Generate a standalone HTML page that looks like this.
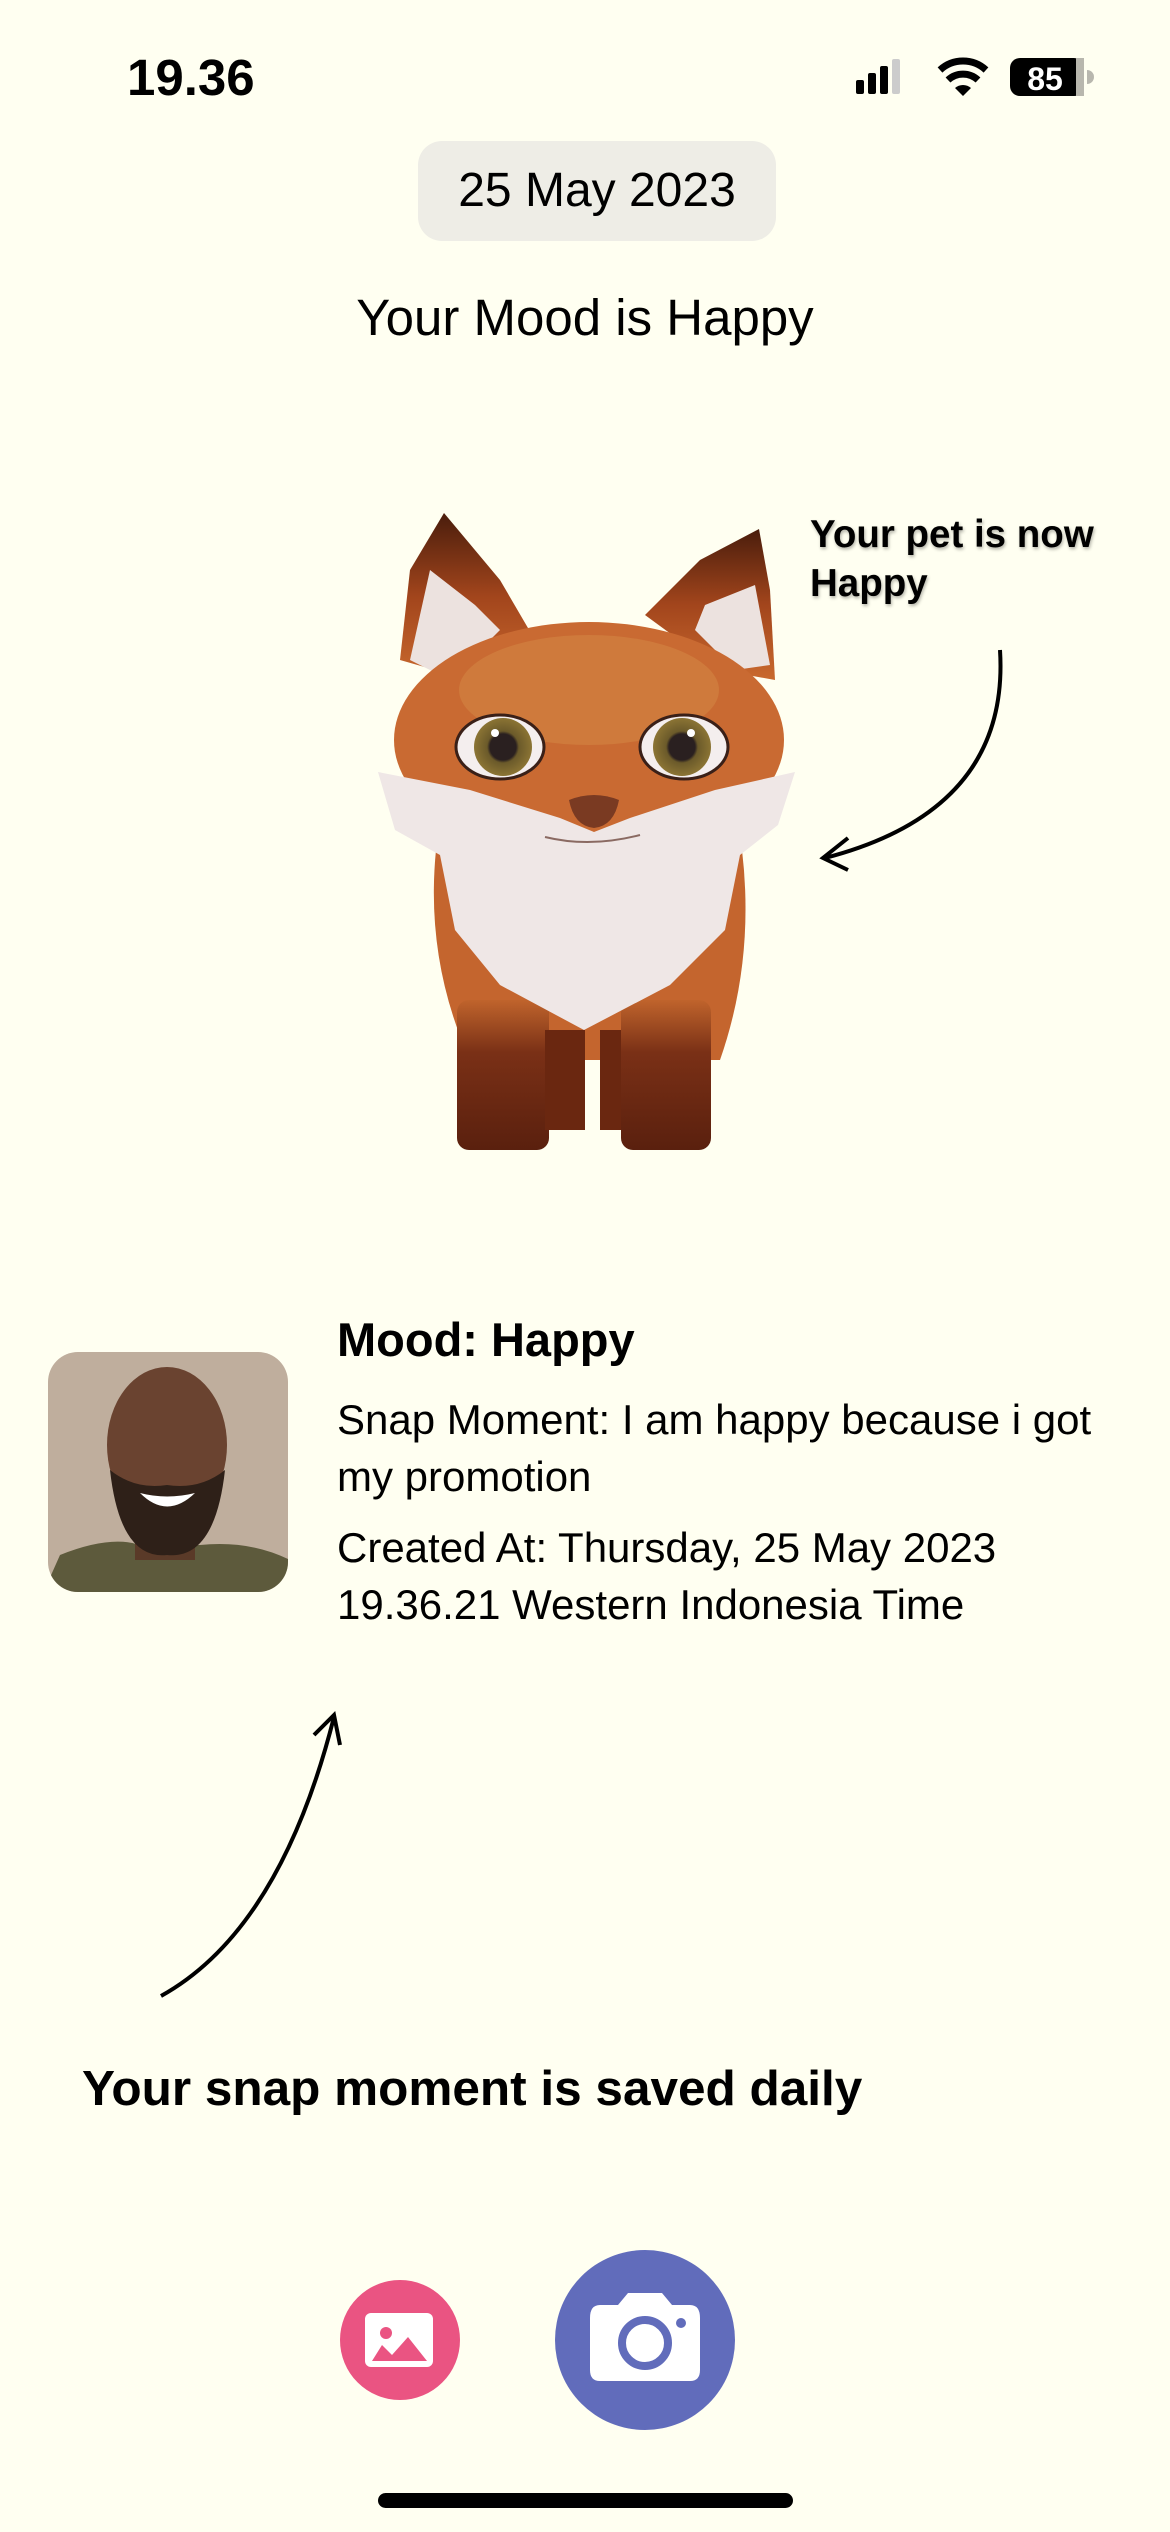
<!DOCTYPE html>
<html><head><meta charset="utf-8">
<style>
html,body{margin:0;padding:0}
body{width:1170px;height:2532px;background:#fffff1;position:relative;overflow:hidden;font-family:"Liberation Sans",sans-serif;color:#000}
.a{position:absolute;white-space:nowrap}
</style></head><body>
<div class="a" style="left:127px;top:48px;font-size:51px;font-weight:bold">19.36</div>
<div class="a" style="left:418px;top:141px;width:358px;height:100px;background:#eeede6;border-radius:24px"></div>
<div class="a" style="left:418px;top:163px;width:358px;text-align:center;font-size:48px">25 May 2023</div>
<div class="a" style="left:0;top:288px;width:1170px;text-align:center;font-size:51px">Your Mood is Happy</div>
<div class="a" style="left:810px;top:510px;font-size:38.5px;font-weight:bold;line-height:49px;text-shadow:1px 2px 3px rgba(0,0,0,.3)">Your pet is now<br>Happy</div>
<div class="a" style="left:337px;top:1312px;font-size:47px;font-weight:bold">Mood: Happy</div>
<div class="a" style="left:337px;top:1391px;font-size:42px;line-height:57px">Snap Moment: I am happy because i got<br>my promotion</div>
<div class="a" style="left:337px;top:1519px;font-size:42px;line-height:57px">Created At: Thursday, 25 May 2023<br>19.36.21 Western Indonesia Time</div>
<div class="a" style="left:82px;top:2060px;font-size:49.5px;font-weight:bold">Your snap moment is saved daily</div>

<svg class="a" style="left:0;top:0" width="1170" height="2532" viewBox="0 0 1170 2532">
<defs>
<linearGradient id="ear" x1="0" y1="0" x2="0" y2="1"><stop offset="0" stop-color="#4a1d0c"/><stop offset=".5" stop-color="#a2451c"/><stop offset="1" stop-color="#c9692e"/></linearGradient>
<linearGradient id="leg" x1="0" y1="0" x2="0" y2="1"><stop offset="0" stop-color="#c0642c"/><stop offset=".35" stop-color="#7a3016"/><stop offset="1" stop-color="#5a200e"/></linearGradient>
<radialGradient id="iris"><stop offset=".45" stop-color="#2a2020"/><stop offset=".55" stop-color="#6b5a2a"/><stop offset="1" stop-color="#8b7434"/></radialGradient>
<clipPath id="av"><rect x="48" y="1352" width="240" height="240" rx="30"/></clipPath>
</defs>
<!-- status icons -->
<rect x="856" y="80" width="8" height="14" rx="2"/><rect x="868" y="73" width="8" height="21" rx="2"/><rect x="880" y="66" width="8" height="28" rx="2"/><rect x="892" y="59" width="8" height="35" rx="2" fill="#ccc"/>
<path d="M940 70 a34 34 0 0 1 46 0" stroke="#000" stroke-width="7" fill="none"/><path d="M948 80 a22 22 0 0 1 30 0" stroke="#000" stroke-width="7" fill="none"/><path d="M955 88 L963 96 L971 88 a12 12 0 0 0 -16 0z"/>
<rect x="1010" y="58" width="74" height="38" rx="10"/><rect x="1076" y="58" width="8" height="38" fill="#b8b7ae"/><path d="M1087 70 a7 7 0 0 1 0 14z" fill="#b8b7ae"/>
<text x="1045" y="90" font-family="Liberation Sans" font-weight="bold" font-size="32" fill="#fff" text-anchor="middle">85</text>
<!-- fox -->
<path d="M444 513 L410 570 L400 660 L470 680 L535 640 L500 580z" fill="url(#ear)"/>
<path d="M430 570 L410 660 L450 680 L500 630 L475 605z" fill="#ece2df"/>
<path d="M759 529 L700 560 L645 615 L720 670 L775 680 L770 590z" fill="url(#ear)"/>
<path d="M755 585 L705 605 L695 630 L735 670 L770 665z" fill="#ece2df"/>
<path d="M436 850 Q425 960 470 1060 L720 1060 Q755 960 742 850z" fill="#c4652e"/>
<rect x="457" y="1000" width="92" height="150" rx="12" fill="url(#leg)"/>
<rect x="545" y="1030" width="40" height="100" fill="#6a2710"/>
<rect x="600" y="1030" width="40" height="100" fill="#6a2710"/>
<rect x="621" y="1000" width="90" height="150" rx="12" fill="url(#leg)"/>
<ellipse cx="589" cy="740" rx="195" ry="118" fill="#c96a32"/>
<ellipse cx="589" cy="690" rx="130" ry="55" fill="#cf7a3c"/>
<path d="M378 772 L470 790 L560 818 L594 832 L630 818 L715 790 L795 772 L778 825 L740 855 L725 930 L670 985 L584 1030 L500 985 L455 930 L440 855 L395 830z" fill="#efe7e6"/>
<path d="M545 837 Q590 848 640 835" stroke="#8a6a62" stroke-width="2" fill="none"/>
<ellipse cx="500" cy="747" rx="44" ry="32" fill="#f4eeee" stroke="#3a2018" stroke-width="3"/>
<circle cx="503" cy="747" r="29" fill="url(#iris)"/><circle cx="495" cy="733" r="4" fill="#fff"/>
<ellipse cx="684" cy="747" rx="44" ry="32" fill="#f4eeee" stroke="#3a2018" stroke-width="3"/>
<circle cx="682" cy="747" r="29" fill="url(#iris)"/><circle cx="691" cy="733" r="4" fill="#fff"/>
<path d="M569 800 Q594 790 619 800 Q614 826 594 828 Q574 826 569 800z" fill="#7a3a22"/>
<!-- arrows -->
<path d="M1000 650 Q1010 810 825 858" stroke="#000" stroke-width="4" fill="none"/>
<path d="M848 838 L823 858 L848 870" stroke="#000" stroke-width="4" fill="none"/>
<path d="M161 1996 Q280 1930 334 1717" stroke="#000" stroke-width="4" fill="none"/>
<path d="M314 1735 L334 1715 L340 1745" stroke="#000" stroke-width="4" fill="none"/>
<!-- avatar -->
<g clip-path="url(#av)">
<rect x="48" y="1352" width="240" height="240" fill="#bfae9d"/>
<path d="M40 1600 L60 1555 Q110 1535 140 1545 L200 1545 Q250 1540 290 1560 L300 1600z" fill="#5d5a3c"/>
<rect x="135" y="1500" width="60" height="60" fill="#5a3a28"/>
<ellipse cx="167" cy="1445" rx="60" ry="78" fill="#6a4330"/>
<path d="M110 1470 Q120 1560 167 1555 Q215 1560 225 1470 Q200 1490 167 1485 Q135 1490 110 1470z" fill="#2e2018"/>
<path d="M140 1493 Q167 1520 195 1493 Q167 1500 140 1493z" fill="#fff"/>
</g>
<!-- bottom buttons -->
<circle cx="400" cy="2340" r="60" fill="#ea5482"/>
<rect x="365" y="2313" width="68" height="54" rx="6" fill="#fff"/>
<path d="M372 2361 L382 2345 L392 2355 L408 2337 L427 2361z" fill="#ea5482"/>
<circle cx="386" cy="2333" r="6" fill="#ea5482"/>
<circle cx="645" cy="2340" r="90" fill="#616cbb"/>
<path d="M600 2305 L618 2305 L628 2293 L662 2293 L672 2305 L690 2305 Q700 2305 700 2318 L700 2370 Q700 2381 690 2381 L600 2381 Q590 2381 590 2370 L590 2318 Q590 2305 600 2305z" fill="#fff"/>
<circle cx="645" cy="2343" r="23" fill="none" stroke="#616cbb" stroke-width="8"/>
<circle cx="681" cy="2323" r="5" fill="#616cbb"/>
<rect x="378" y="2493" width="415" height="15" rx="7.5"/>
</svg>
</body></html>
